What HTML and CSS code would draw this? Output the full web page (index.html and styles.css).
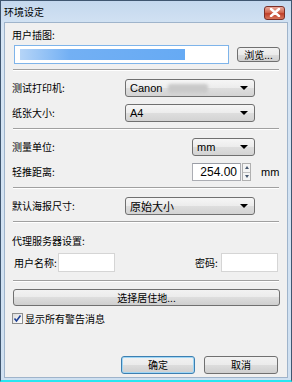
FILE: index.html
```html
<!DOCTYPE html>
<html>
  <head>
    <title>环境设定</title>
    <link rel="stylesheet" href="styles.css">
  </head>
  <body>
    <div class="window">
      <div class="titlebar">
        <span class="title">环境设定</span>
        <span class="close">
          <svg width="12" height="9" viewBox="0 0 12 9">
            <path d="M2 1 L10 8 M10 1 L2 8" stroke="#fff" stroke-width="2.4" stroke-linecap="round"/>
          </svg>
        </span>
      </div>
      <div class="panel">
        <div class="label-top">用户插图:</div>
        <div class="row file-row">
          <div class="input wide"><span class="selection"></span></div>
          <div class="button browse">浏览...</div>
        </div>
        <div class="sep"></div>

        <div class="row field">
          <span class="label">测试打印机:</span>
          <div class="select long"><span>Canon <span class="blur"></span></span><i class="arrow"></i></div>
        </div>
        <div class="row field">
          <span class="label">纸张大小:</span>
          <div class="select long"><span>A4</span><i class="arrow"></i></div>
        </div>
        <div class="sep"></div>

        <div class="row field">
          <span class="label">测量单位:</span>
          <div class="select short"><span>mm</span><i class="arrow"></i></div>
        </div>
        <div class="row field">
          <span class="label">轻推距离:</span>
          <div class="input number">254.00</div>
          <div class="spin">
            <span class="up"></span>
            <span class="down"></span>
          </div>
          <span class="unit">mm</span>
        </div>
        <div class="sep"></div>

        <div class="row field">
          <span class="label">默认海报尺寸:</span>
          <div class="select long"><span>原始大小</span><i class="arrow"></i></div>
        </div>
        <div class="sep"></div>

        <div class="label-top proxy">代理服务器设置:</div>
        <div class="row cred">
          <span class="cred-label">用户名称:</span>
          <div class="input small"></div>
          <span class="cred-label pass">密码:</span>
          <div class="input small"></div>
        </div>
        <div class="sep"></div>

        <div class="button full">选择居住地...</div>
        <label class="check">
          <span class="box">
            <svg width="9" height="9" viewBox="0 0 9 9">
              <path d="M1.5 4.5 L3.5 7 L7.5 1.5" stroke="#1c3f94" stroke-width="1.6" fill="none"/>
            </svg>
          </span>
          显示所有警告消息
        </label>

        <div class="actions">
          <div class="button action default">确定</div>
          <div class="button action">取消</div>
        </div>
      </div>
    </div>
  </body>
</html>
```

FILE: styles.css
```css
body {
  margin: 0;
  background-color: #f0f0f0;
  font-family: "Noto Sans CJK SC", "Liberation Sans", sans-serif;
  font-size: 10px;
  color: #000;
}

.window {
  width: 292px;
  height: 382px;
  box-sizing: border-box;
  background: linear-gradient(#c4d8ee, #d6e5f4 30px, #cfe0f1);
  border: 1px solid #3f5670;
  border-bottom: 2px solid #29e6f0;
  display: flex;
  flex-direction: column;
}

.titlebar {
  height: 21px;
  display: flex;
  align-items: center;
  justify-content: space-between;
  padding: 0 6px 0 3px;
}

.title {
  line-height: 12px;
  margin-top: 1px;
}

.close {
  width: 21px;
  height: 14px;
  margin-top: 2px;
  border: 1px solid #7a3028;
  border-radius: 3px;
  box-sizing: border-box;
  background: linear-gradient(#e9a99c, #d36a52 45%, #c0402a 55%, #d7765c);
  display: flex;
  align-items: center;
  justify-content: center;
}

.panel {
  flex: 1;
  margin: 0 3px 2px 3px;
  background-color: #f0f0f0;
  border: 1px solid #9fb4cb;
  padding: 0 7px;
  display: flex;
  flex-direction: column;
}

.label-top {
  height: 12px;
  line-height: 12px;
  margin-top: 6px;
}

.row {
  display: flex;
  align-items: center;
  white-space: nowrap;
}

.file-row {
  margin-top: 4px;
  height: 19px;
}

.input {
  background: #fff;
  border: 1px solid #abadb3;
  border-top-color: #9a9da5;
  box-sizing: border-box;
  flex-shrink: 0;
}

.wide {
  width: 215px;
  height: 19px;
  margin-left: 2px;
  border-color: #7eb4ea;
  padding: 3px 4px 3px 5px;
}

.selection {
  display: block;
  width: 165px;
  height: 11px;
  background: linear-gradient(90deg, #a8cdf6, #5aa2f2 30%, #4b9bf2);
  opacity: 0.85;
}

.button {
  box-sizing: border-box;
  border: 1px solid #707070;
  border-radius: 3px;
  background: linear-gradient(#f2f2f2, #ebebeb 50%, #dddddd 50%, #cfcfcf);
  display: flex;
  align-items: center;
  justify-content: center;
  line-height: 12px;
}

.browse {
  width: 46px;
  height: 15px;
  margin-left: 8px;
}

.sep {
  height: 1px;
  background: #a0a0a0;
  border-bottom: 1px solid #fff;
  margin-left: 1px;
  margin-right: 1px;
}

.file-row + .sep {
  margin-top: 5px;
}

.field {
  height: 18px;
  margin-top: 8px;
}

.field + .field {
  margin-top: 7px;
}

.field + .sep {
  margin-top: 6px;
}

.label {
  width: 113px;
  line-height: 12px;
}

.select {
  box-sizing: border-box;
  height: 18px;
  border: 1px solid #707070;
  border-radius: 3px;
  background: linear-gradient(#f6f6f6, #ececec 50%, #dedede 50%, #d3d3d3);
  display: flex;
  align-items: center;
  justify-content: space-between;
  padding: 0 6px 0 4px;
  font-family: "Liberation Sans", "Noto Sans CJK SC", sans-serif;
  font-size: 11px;
}

.select span {
  display: flex;
  align-items: center;
}

.long {
  width: 130px;
}

.short {
  width: 63px;
  margin-left: 67px;
}

.blur {
  display: inline-block;
  width: 40px;
  height: 9px;
  margin-left: 6px;
  background: #c9c9c9;
  border-radius: 3px;
  filter: blur(1.5px);
}

.arrow {
  width: 0;
  height: 0;
  border-left: 4px solid transparent;
  border-right: 4px solid transparent;
  border-top: 4px solid #000;
}

.number {
  width: 49px;
  height: 18px;
  margin-left: 67px;
  text-align: right;
  padding: 2px 3px 0 0;
  font-family: "Liberation Sans", sans-serif;
  font-size: 12px;
  line-height: 13px;
}

.spin {
  width: 9px;
  height: 18px;
  margin-left: 1px;
  display: flex;
  flex-direction: column;
  border: 1px solid #b0b0b0;
  box-sizing: border-box;
  background: #f4f4f4;
}

.spin span {
  flex: 1;
  display: flex;
  align-items: center;
  justify-content: center;
}

.spin .up {
  border-bottom: 1px solid #c0c0c0;
}

.spin .up::after {
  content: "";
  border-left: 2.5px solid transparent;
  border-right: 2.5px solid transparent;
  border-bottom: 3px solid #4a5a70;
}

.spin .down::after {
  content: "";
  border-left: 2.5px solid transparent;
  border-right: 2.5px solid transparent;
  border-top: 3px solid #4a5a70;
}

.unit {
  margin-left: 10px;
  font-family: "Liberation Sans", sans-serif;
  font-size: 11px;
}

.proxy {
  margin-top: 12px;
}

.cred {
  height: 19px;
  margin-top: 6px;
  padding-left: 2px;
}

.cred-label {
  width: 44px;
  line-height: 12px;
}

.pass {
  width: 26px;
  margin-left: 80px;
}

.small {
  width: 57px;
  height: 19px;
  border-color: #d5d5d5;
}

.cred + .sep {
  margin-top: 8px;
}

.full {
  height: 17px;
  margin-top: 7px;
  margin-left: 1px;
}

.check {
  display: flex;
  align-items: center;
  margin-top: 6px;
  height: 13px;
  line-height: 12px;
}

.box {
  width: 11px;
  height: 11px;
  box-sizing: border-box;
  border: 1px solid #8e8f8f;
  background: linear-gradient(135deg, #dcdcdc, #ffffff);
  display: flex;
  align-items: center;
  justify-content: center;
  margin-right: 2px;
}

.actions {
  margin-top: auto;
  margin-bottom: 3px;
  display: flex;
  justify-content: flex-end;
  gap: 9px;
  padding-right: 2px;
}

.action {
  width: 74px;
  height: 18px;
}

.default {
  border-color: #3c7fb1;
  box-shadow: inset 0 0 0 1px #9fd6f5;
}
```
